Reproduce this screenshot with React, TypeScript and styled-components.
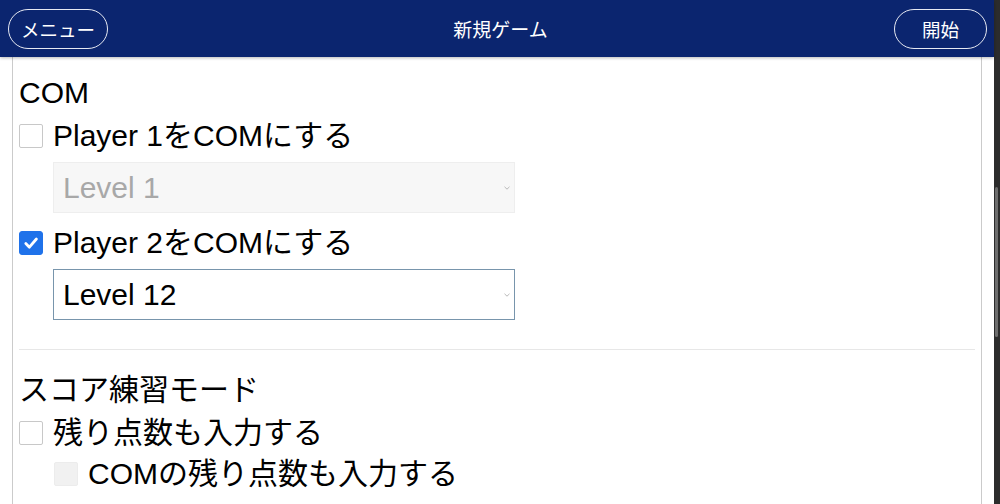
import React from 'react';
import styled, { createGlobalStyle } from 'styled-components';

const GlobalStyle = createGlobalStyle`
    html, body {
        margin: 0;
        padding: 0;
        background: #ffffff;
    }
    body {
        font-family: 'Liberation Sans', 'Noto Sans CJK JP', sans-serif;
        color: #000000;
    }
`;

interface CheckProps {
    checked?: boolean;
    disabled?: boolean;
}

const Check: React.FC<CheckProps> = ({ checked, disabled }) => (
    <CheckBox $checked={checked} $disabled={disabled}>
        {checked && (
            <svg width="16" height="16" viewBox="0 0 16 16">
                <path
                    d="M2.8 8.6 L6.4 12.2 L13.4 4"
                    fill="none"
                    stroke="#ffffff"
                    strokeWidth="2.8"
                    strokeLinecap="round"
                    strokeLinejoin="round"
                />
            </svg>
        )}
    </CheckBox>
);

interface LevelSelectProps {
    value: string;
    disabled?: boolean;
}

const LevelSelect: React.FC<LevelSelectProps> = ({ value, disabled }) => (
    <SelectBox $disabled={disabled}>
        <span>{value}</span>
        <svg width="6" height="4" viewBox="0 0 6 4">
            <path d="M0.5 0.8 L3 3.2 L5.5 0.8" fill="none" stroke="#b0b0b0" strokeWidth="0.9" />
        </svg>
    </SelectBox>
);

const App: React.FC = () => {
    return (
        <>
            <GlobalStyle />
            <Shell>
                <Main>
                    <Header>
                        <HeaderSide>
                            <PillButton>メニュー</PillButton>
                        </HeaderSide>
                        <Title>新規ゲーム</Title>
                        <HeaderSide $end>
                            <PillButton $narrow>開始</PillButton>
                        </HeaderSide>
                    </Header>
                    <Content>
                        <Panel>
                            <SectionTitle>COM</SectionTitle>
                            <CheckRow $top={3}>
                                <Check />
                                <Label>Player 1をCOMにする</Label>
                            </CheckRow>
                            <SelectIndent>
                                <LevelSelect value="Level 1" disabled />
                            </SelectIndent>
                            <CheckRow $top={0}>
                                <Check checked />
                                <Label>Player 2をCOMにする</Label>
                            </CheckRow>
                            <SelectIndent>
                                <LevelSelect value="Level 12" />
                            </SelectIndent>
                            <Divider />
                            <SectionTitle>スコア練習モード</SectionTitle>
                            <CheckRow $top={3}>
                                <Check />
                                <Label>残り点数も入力する</Label>
                            </CheckRow>
                            <CheckRow $top={1} $indent={35}>
                                <Check disabled />
                                <Label>COMの残り点数も入力する</Label>
                            </CheckRow>
                        </Panel>
                    </Content>
                </Main>
                <ScrollTrack>
                    <ScrollThumb />
                </ScrollTrack>
            </Shell>
        </>
    );
};
export default App;

const Shell = styled.div`
    display: flex;
    width: 1000px;
    height: 504px;
    overflow: hidden;
`;

const Main = styled.div`
    flex: 1;
    display: flex;
    flex-direction: column;
    min-width: 0;
`;

const Header = styled.header`
    height: 57px;
    flex-shrink: 0;
    display: grid;
    grid-template-columns: 1fr auto 1fr;
    align-items: center;
    padding: 0 7px 0 8px;
    background-color: #0b256f;
    box-shadow: 0 1px 3px rgba(0, 0, 0, 0.28);
    position: relative;
    z-index: 1;
`;

const HeaderSide = styled.div<{ $end?: boolean }>`
    display: flex;
    justify-content: ${({ $end }) => ($end ? 'flex-end' : 'flex-start')};
`;

const PillButton = styled.button.attrs({ type: 'button' })<{ $narrow?: boolean }>`
    width: ${({ $narrow }) => ($narrow ? '93px' : '100px')};
    height: 40px;
    padding: 0;
    border: 1.5px solid #e6e9f2;
    border-radius: 20px;
    background: transparent;
    color: #ffffff;
    font-family: 'Liberation Sans', 'Noto Sans CJK JP', sans-serif;
    font-size: 18.5px;
    cursor: pointer;
`;

const Title = styled.div`
    color: #ffffff;
    font-size: 19px;
    padding-left: 6px;
`;

const Content = styled.main`
    flex: 1;
    display: flex;
    padding: 0 12px;
`;

const Panel = styled.div`
    flex: 1;
    display: flex;
    flex-direction: column;
    padding: 16px 6px 0;
    border-left: 1px solid #cbcbcb;
    border-right: 1px solid #cbcbcb;
`;

const SectionTitle = styled.div`
    height: 40px;
    line-height: 40px;
    font-size: 30px;
    white-space: nowrap;
`;

const CheckRow = styled.label<{ $top: number; $indent?: number }>`
    display: flex;
    align-items: center;
    gap: 10px;
    height: 40px;
    margin-top: ${({ $top }) => $top}px;
    margin-left: ${({ $indent }) => $indent ?? 0}px;
`;

const CheckBox = styled.span<{ $checked?: boolean; $disabled?: boolean }>`
    width: 24px;
    height: 24px;
    box-sizing: border-box;
    flex-shrink: 0;
    display: flex;
    align-items: center;
    justify-content: center;
    border-radius: ${({ $checked }) => ($checked ? '3px' : '2px')};
    border: 1px solid
        ${({ $checked, $disabled }) => ($checked ? '#1f72ea' : $disabled ? '#ececec' : '#c8c8c8')};
    background-color: ${({ $checked, $disabled }) =>
        $checked ? '#1f72ea' : $disabled ? '#f1f1f1' : '#ffffff'};
`;

const Label = styled.span`
    font-size: 30px;
    line-height: 40px;
    white-space: nowrap;
`;

const SelectIndent = styled.div`
    margin: 6px 0 10px 34px;
`;

const SelectBox = styled.div<{ $disabled?: boolean }>`
    width: 462px;
    height: 51px;
    box-sizing: border-box;
    display: flex;
    align-items: center;
    justify-content: space-between;
    padding: 0 4px 0 9px;
    font-size: 30px;
    border: 1px solid ${({ $disabled }) => ($disabled ? '#eeeeee' : '#7895ac')};
    background-color: ${({ $disabled }) => ($disabled ? '#f7f7f7' : '#ffffff')};
    color: ${({ $disabled }) => ($disabled ? '#a8a8a8' : '#000000')};
`;

const Divider = styled.hr`
    margin: 19px 0 20px;
    border: none;
    height: 1px;
    background-color: #e7e7e7;
`;

const ScrollTrack = styled.div`
    width: 6px;
    flex-shrink: 0;
    background-color: #2c2c2c;
    padding-top: 187px;
    box-sizing: border-box;
`;

const ScrollThumb = styled.div`
    width: 3px;
    height: 150px;
    margin-left: 1px;
    border-radius: 2px;
    background-color: #6e6e6e;
`;
